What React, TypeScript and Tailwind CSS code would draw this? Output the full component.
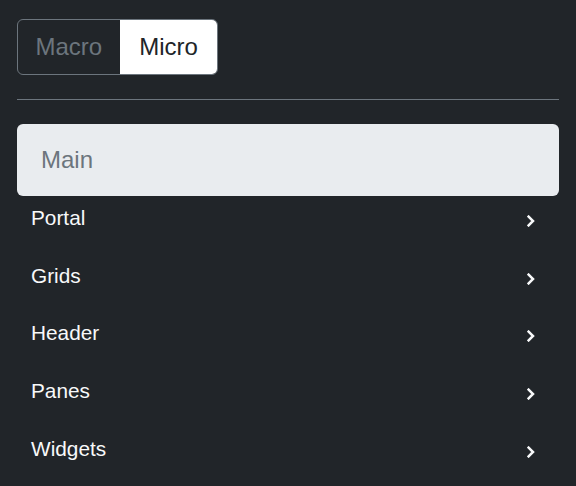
import { useState } from "react";

const items = ["Portal", "Grids", "Header", "Panes", "Widgets"];

function Chevron() {
  return (
    <svg width="8" height="12" viewBox="0 0 8 12" className="mt-[13px]">
      <polyline
        points="1.6,1.6 6,6 1.6,10.4"
        fill="none"
        stroke="#f8f9fa"
        strokeWidth="2.5"
        strokeLinecap="square"
      />
    </svg>
  );
}

export default function App() {
  const [mode, setMode] = useState("Micro");

  return (
    <div
      className="w-[576px] h-[486px] bg-[#212529] px-[17px] pt-[19px] overflow-hidden"
      style={{ fontFamily: '"Liberation Sans", Arial, sans-serif' }}
    >
      <div className="flex w-fit rounded-[6px] border border-[#6c757d] overflow-hidden h-[56px]">
        <button
          onClick={() => setMode("Macro")}
          className={
            mode == "Macro"
              ? "bg-white text-[#212529] text-[24px] px-[17.5px] h-full"
              : "text-[#6c757d] text-[24px] px-[17.5px] h-full"
          }
        >
          Macro
        </button>
        <button
          onClick={() => setMode("Micro")}
          className={
            mode == "Micro"
              ? "bg-white text-[#212529] text-[24px] px-[19.5px] h-full"
              : "text-[#6c757d] text-[24px] px-[19.5px] h-full"
          }
        >
          Micro
        </button>
      </div>

      <div className="mt-[24px] border-t border-[#6c757d]" />

      <div className="mt-[24px] h-[72px] rounded-[6px] bg-[#e9ecef] flex items-center px-[24px]">
        <span className="text-[24px] text-[#6c757d]">Main</span>
      </div>

      <div className="flex flex-col">
        {items.map((it) => (
          <div
            key={it}
            className="h-[57.7px] flex items-start justify-between pl-[14px] pr-[24px] pt-[6px] text-[#f8f9fa]"
          >
            <span className="text-[20.8px] leading-[31px]">{it}</span>
            <Chevron />
          </div>
        ))}
      </div>
    </div>
  );
}
